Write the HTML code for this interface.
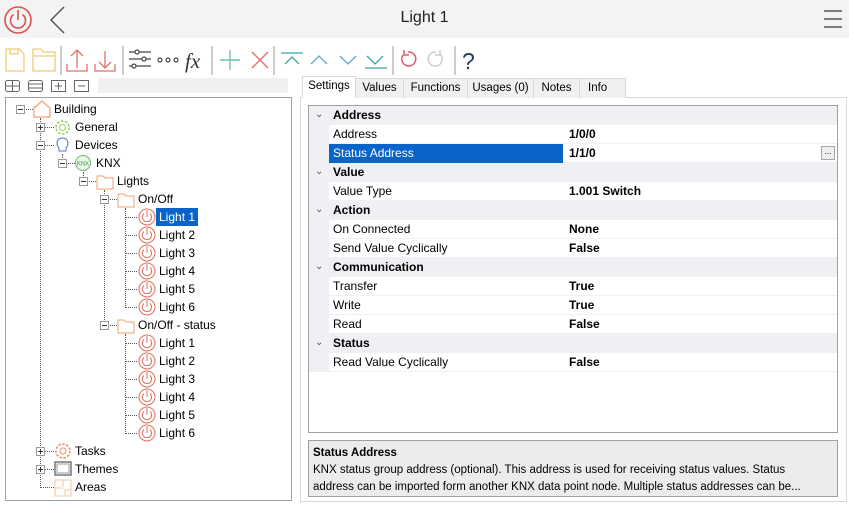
<!DOCTYPE html>
<html><head><meta charset="utf-8"><style>
*{margin:0;padding:0;box-sizing:border-box}
body{width:849px;height:507px;background:#fff;font-family:"Liberation Sans",sans-serif;font-size:12px;color:#000;position:relative;overflow:hidden}
.a{position:absolute}
.t{position:absolute;height:18px;line-height:19px;white-space:nowrap}
.ex{position:absolute;width:9px;height:9px;border:1px solid #999;background:#fff}
.ex:before{content:"";position:absolute;left:1px;top:3px;width:5px;height:1px;background:#333}
.ex.p:after{content:"";position:absolute;left:3px;top:1px;width:1px;height:5px;background:#333}
.vl{position:absolute;border-left:1px dotted #555;width:0}
.hl{position:absolute;border-top:1px dotted #555;height:0}
.row{position:absolute;left:309px;width:528px;height:19px;line-height:19px;border-bottom:1px solid #f0f0f0}
.row .n{position:absolute;left:24px}
.row .v{position:absolute;left:260px;font-weight:bold}
.hd{background:#eef0f3}
.hd .n{font-weight:bold}
.hd .c{position:absolute;left:6px;top:-1px;color:#555;font-size:10px}
.tab{position:absolute;top:78px;height:20px;line-height:19px;border:1px solid #d9d9d9;border-bottom:none;background:#f0f0f0;text-align:center;font-size:11.5px}
</style></head><body>
<div class="a" style="left:0;top:0;width:849px;height:38px;background:#f3f3f3"></div>
<svg class="a" style="left:3px;top:5px" width="30" height="30" viewBox="0 0 30 30"><circle cx="15" cy="15" r="13" fill="none" stroke="#d9534f" stroke-width="1.6"/><path d="M10.5 9.5A7.5 7.5 0 1 0 19.5 9.5" fill="none" stroke="#d9534f" stroke-width="1.6"/><path d="M15 5v10" stroke="#d9534f" stroke-width="1.6"/></svg>
<svg class="a" style="left:48px;top:5px" width="20" height="30"><path d="M16 2L3 15l13 13" fill="none" stroke="#555" stroke-width="1.5"/></svg>
<div class="a" style="left:0;width:849px;top:9px;text-align:center;font-size:16px;color:#222">Light 1</div>
<svg class="a" style="left:822px;top:8px" width="22" height="22"><path d="M2 3h18M2 11h18M2 19h18" stroke="#555" stroke-width="1.5"/></svg>
<svg class="a" style="left:0;top:40px" width="480" height="36">
<g fill="none" stroke="#f0c97a" stroke-width="1.3"><path d="M6 9h13l5 5v17H6z"/><path d="M10 9v5h8V9"/><path d="M33 9h8l2 3h12v19H33z"/><path d="M33 16h22"/></g>
<path d="M61 6v29" stroke="#999"/>
<g fill="none" stroke="#e2726b" stroke-width="1.3"><path d="M67 24v7h20v-7M77 28V10M71 16l6-6 6 6"/><path d="M95 24v7h20v-7M105 11v17M99 22l6 6 6-6"/></g>
<path d="M123 6v29" stroke="#999"/>
<g fill="none" stroke="#444" stroke-width="1.2"><path d="M129 12h22M129 19h22M129 26h22"/><circle cx="137" cy="12" r="2" fill="#fff"/><circle cx="144" cy="19" r="2" fill="#fff"/><circle cx="134" cy="26" r="2" fill="#fff"/><circle cx="160" cy="20" r="2"/><circle cx="168" cy="20" r="2"/><circle cx="176" cy="20" r="2"/></g>
<text x="185" y="28" font-family="Liberation Serif" font-style="italic" font-size="21" fill="#333">fx</text>
<path d="M212 6v29" stroke="#999"/>
<g fill="none" stroke-width="1.4"><path d="M230 10v20M220 20h20" stroke="#6cc2a8"/><path d="M252 12l16 16M268 12l-16 16" stroke="#e2726b"/></g>
<path d="M274 6v29" stroke="#999"/>
<g fill="none" stroke-width="1.3"><path d="M281 13h22M285 24l7-7 7 7" stroke="#3aa5a5"/><path d="M311 24l8-8 8 8" stroke="#5aa8d8"/><path d="M340 16l8 8 8-8" stroke="#5aa8d8"/><path d="M367 16l8 8 8-8M365 28h22" stroke="#3aa5a5"/></g>
<path d="M393 6v29" stroke="#999"/>
<g fill="none" stroke-width="1.5"><path d="M403 15a7 7 0 1 0 5-3M404 10v5h5" stroke="#e0556a"/><path d="M441 15a7 7 0 1 1-5-3M440 10v5h-5" stroke="#ccc"/></g>
<path d="M455 6v29" stroke="#999"/>
<text x="462" y="29" font-size="23" fill="#1d3a5c">?</text>
</svg>
<svg class="a" style="left:4px;top:79px" width="90" height="14"><g fill="none" stroke="#666"><rect x="1.5" y="1.5" width="14" height="11" rx="2"/><path d="M1.5 7h14M8.5 1.5v11"/><rect x="24.5" y="1.5" width="14" height="11" rx="2"/><path d="M24.5 5h14M24.5 9h14"/><rect x="47.5" y="1.5" width="14" height="11"/><path d="M51 7h7M54.5 3.5v7"/><rect x="70.5" y="1.5" width="14" height="11"/><path d="M74 7h7"/></g></svg>
<div class="a" style="left:98px;top:78px;width:190px;height:15px;background:#f0f0f0"></div>
<div class="a" style="left:5px;top:97px;width:287px;height:404px;border:1px solid #a0a0a0"></div>
<div class="vl" style="left:40px;top:118px;height:370px"></div>
<div class="vl" style="left:62px;top:154px;height:10px"></div>
<div class="vl" style="left:83px;top:172px;height:10px"></div>
<div class="vl" style="left:104px;top:190px;height:136px"></div>
<div class="vl" style="left:125px;top:208px;height:100px"></div>
<div class="vl" style="left:125px;top:334px;height:100px"></div>
<div class="hl" style="left:21px;top:109px;width:12px"></div>
<div class="hl" style="left:42px;top:127px;width:12px"></div>
<div class="hl" style="left:42px;top:145px;width:12px"></div>
<div class="hl" style="left:63px;top:163px;width:12px"></div>
<div class="hl" style="left:84px;top:181px;width:12px"></div>
<div class="hl" style="left:105px;top:199px;width:12px"></div>
<div class="hl" style="left:105px;top:325px;width:12px"></div>
<div class="hl" style="left:42px;top:451px;width:12px"></div>
<div class="hl" style="left:42px;top:469px;width:12px"></div>
<div class="hl" style="left:40px;top:487px;width:14px"></div>
<div class="hl" style="left:125px;top:217px;width:12px"></div><div class="hl" style="left:125px;top:235px;width:12px"></div><div class="hl" style="left:125px;top:253px;width:12px"></div><div class="hl" style="left:125px;top:271px;width:12px"></div><div class="hl" style="left:125px;top:289px;width:12px"></div><div class="hl" style="left:125px;top:307px;width:12px"></div>
<div class="hl" style="left:125px;top:343px;width:12px"></div><div class="hl" style="left:125px;top:361px;width:12px"></div><div class="hl" style="left:125px;top:379px;width:12px"></div><div class="hl" style="left:125px;top:397px;width:12px"></div><div class="hl" style="left:125px;top:415px;width:12px"></div><div class="hl" style="left:125px;top:433px;width:12px"></div>
<div class="ex" style="left:16px;top:105px"></div>
<div class="ex p" style="left:36px;top:123px"></div>
<div class="ex" style="left:36px;top:141px"></div>
<div class="ex" style="left:58px;top:159px"></div>
<div class="ex" style="left:79px;top:177px"></div>
<div class="ex" style="left:100px;top:195px"></div>
<div class="ex" style="left:100px;top:321px"></div>
<div class="ex p" style="left:36px;top:447px"></div>
<div class="ex p" style="left:36px;top:465px"></div>
<svg class="a" style="left:32px;top:99px" width="20" height="19"><path d="M2 9L10 2l8 7v9H2z" fill="none" stroke="#f0a070" stroke-width="1.2"/></svg>
<svg class="a" style="left:54px;top:119px" width="17" height="17"><circle cx="8.5" cy="8.5" r="3" fill="none" stroke="#9ccf5a"/><circle cx="8.5" cy="8.5" r="6.5" fill="none" stroke="#9ccf5a" stroke-dasharray="2.5 1.6" stroke-width="1.6"/></svg>
<svg class="a" style="left:54px;top:136px" width="17" height="18"><path d="M5 12c-3-3-3-10 3.5-10S15 9 12 12v3H5z" fill="none" stroke="#5a6fc8"/></svg>
<svg class="a" style="left:74px;top:154px" width="18" height="18"><circle cx="9" cy="9" r="7.5" fill="#eaf6ea" stroke="#6cb86c"/><text x="9" y="11.5" font-size="6" text-anchor="middle" fill="#4a8a4a">KNX</text></svg>
<svg class="a" style="left:96px;top:172px" width="18" height="18"><path d="M1 4h6l2 2h8v11H1z" fill="none" stroke="#f0a070"/></svg>
<svg class="a" style="left:117px;top:190px" width="18" height="18"><path d="M1 4h6l2 2h8v11H1z" fill="none" stroke="#f0a070"/></svg>
<svg class="a" style="left:117px;top:316px" width="18" height="18"><path d="M1 4h6l2 2h8v11H1z" fill="none" stroke="#f0a070"/></svg>
<svg class="a" style="left:138px;top:208px" width="18" height="234">
<defs><g id="pw"><circle cx="9" cy="9" r="8" fill="none" stroke="#e07060"/><path d="M6 5.5A4.6 4.6 0 1 0 12 5.5M9 2v7" fill="none" stroke="#e07060"/></g></defs>
<use href="#pw"/><use href="#pw" y="18"/><use href="#pw" y="36"/><use href="#pw" y="54"/><use href="#pw" y="72"/><use href="#pw" y="90"/>
<use href="#pw" y="126"/><use href="#pw" y="144"/><use href="#pw" y="162"/><use href="#pw" y="180"/><use href="#pw" y="198"/><use href="#pw" y="216"/></svg>
<svg class="a" style="left:54px;top:442px" width="18" height="18"><circle cx="9" cy="9" r="3" fill="none" stroke="#e8906a"/><circle cx="9" cy="9" r="7" fill="none" stroke="#e8906a" stroke-dasharray="2.5 1.5" stroke-width="1.6"/></svg>
<svg class="a" style="left:54px;top:461px" width="18" height="16"><rect x="1" y="1" width="16" height="13" fill="none" stroke="#555" stroke-width="1.2"/><rect x="3" y="3" width="12" height="9" fill="none" stroke="#999"/></svg>
<svg class="a" style="left:54px;top:479px" width="18" height="18"><rect x="1" y="1" width="16" height="16" fill="none" stroke="#f0c8a0"/><path d="M9 1v7M1 9h8M11 17v-6h6" fill="none" stroke="#f0c8a0"/></svg>
<div class="t" style="left:54px;top:100px">Building</div>
<div class="t" style="left:75px;top:118px">General</div>
<div class="t" style="left:75px;top:136px">Devices</div>
<div class="t" style="left:96px;top:154px">KNX</div>
<div class="t" style="left:117px;top:172px">Lights</div>
<div class="t" style="left:138px;top:190px">On/Off</div>
<div class="t" style="left:156px;top:208px;background:#0a64c8;color:#fff;padding:0 3px">Light 1</div>
<div class="t" style="left:159px;top:226px">Light 2</div>
<div class="t" style="left:159px;top:244px">Light 3</div>
<div class="t" style="left:159px;top:262px">Light 4</div>
<div class="t" style="left:159px;top:280px">Light 5</div>
<div class="t" style="left:159px;top:298px">Light 6</div>
<div class="t" style="left:138px;top:316px">On/Off - status</div>
<div class="t" style="left:159px;top:334px">Light 1</div>
<div class="t" style="left:159px;top:352px">Light 2</div>
<div class="t" style="left:159px;top:370px">Light 3</div>
<div class="t" style="left:159px;top:388px">Light 4</div>
<div class="t" style="left:159px;top:406px">Light 5</div>
<div class="t" style="left:159px;top:424px">Light 6</div>
<div class="t" style="left:75px;top:442px">Tasks</div>
<div class="t" style="left:75px;top:460px">Themes</div>
<div class="t" style="left:75px;top:478px">Areas</div>
<div class="a" style="left:300px;top:97px;width:547px;height:405px;border:1px solid #d9d9d9;background:#fff"></div>
<div class="tab" style="left:355px;width:49px">Values</div>
<div class="tab" style="left:403px;width:65px">Functions</div>
<div class="tab" style="left:467px;width:67px">Usages (0)</div>
<div class="tab" style="left:533px;width:47px">Notes</div>
<div class="tab" style="left:579px;width:47px;text-align:left;padding-left:8px">Info</div>
<div class="tab" style="left:302px;top:76px;height:22px;width:54px;background:#fff">Settings</div>
<div class="a" style="left:308px;top:105px;width:530px;height:328px;border:1px solid #a0a0a0"></div>
<div class="a" style="left:309px;top:106px;width:20px;height:266px;background:#eef0f3"></div>
<div class="row hd" style="top:106px"><span class="c">&#8964;</span><span class="n">Address</span></div>
<div class="row" style="top:125px;left:329px;width:508px"><span class="n" style="left:4px">Address</span><span class="v" style="left:240px">1/0/0</span></div>
<div class="row" style="top:144px;left:329px;width:508px"><span class="n" style="left:0;width:234px;background:#0a64c8;color:#fff;padding-left:4px">Status Address</span><span class="v" style="left:240px">1/1/0</span><span class="a" style="left:492px;top:2px;width:14px;height:14px;border:1px solid #aaa;background:#eee;font-size:8px;line-height:10px;text-align:center">...</span></div>
<div class="row hd" style="top:163px"><span class="c">&#8964;</span><span class="n">Value</span></div>
<div class="row" style="top:182px"><span class="n">Value Type</span><span class="v">1.001 Switch</span></div>
<div class="row hd" style="top:201px"><span class="c">&#8964;</span><span class="n">Action</span></div>
<div class="row" style="top:220px"><span class="n">On Connected</span><span class="v">None</span></div>
<div class="row" style="top:239px"><span class="n">Send Value Cyclically</span><span class="v">False</span></div>
<div class="row hd" style="top:258px"><span class="c">&#8964;</span><span class="n">Communication</span></div>
<div class="row" style="top:277px"><span class="n">Transfer</span><span class="v">True</span></div>
<div class="row" style="top:296px"><span class="n">Write</span><span class="v">True</span></div>
<div class="row" style="top:315px"><span class="n">Read</span><span class="v">False</span></div>
<div class="row hd" style="top:334px"><span class="c">&#8964;</span><span class="n">Status</span></div>
<div class="row" style="top:353px"><span class="n">Read Value Cyclically</span><span class="v">False</span></div>
<div class="a" style="left:308px;top:440px;width:530px;height:57px;border:1px solid #a0a0a0;background:#ececec;padding:4px 4px;line-height:17px;font-size:11.5px;white-space:nowrap"><b>Status Address</b><br>KNX status group address (optional). This address is used for receiving status values. Status<br>address can be imported form another KNX data point node. Multiple status addresses can be...</div>
</body></html>
